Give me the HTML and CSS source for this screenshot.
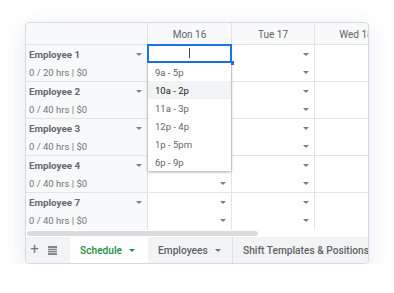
FILE: index.html
```html
<!DOCTYPE html>
<html>
<head>
<meta charset="utf-8">
<link rel="stylesheet" href="styles.css">
</head>
<body>
<div class="card">
  <div class="sheet">
    <div class="grid">
      <div class="hcell corner"></div>
      <div class="hcell">Mon 16</div>
      <div class="hcell">Tue 17</div>
      <div class="hcell">Wed 18</div>

      <div class="emp"><div class="line name">Employee 1<span class="arr"></span></div><div class="line sub">0 / 20 hrs | $0</div></div>
      <div class="day"><div class="line"><span class="arr"></span></div><div class="line"><span class="arr"></span></div></div>
      <div class="day"><div class="line"><span class="arr"></span></div><div class="line"><span class="arr"></span></div></div>
      <div class="day"><div class="line"><span class="arr"></span></div><div class="line"><span class="arr"></span></div></div>

      <div class="emp"><div class="line name">Employee 2<span class="arr"></span></div><div class="line sub">0 / 40 hrs | $0</div></div>
      <div class="day"><div class="line"><span class="arr"></span></div><div class="line"><span class="arr"></span></div></div>
      <div class="day"><div class="line"><span class="arr"></span></div><div class="line"><span class="arr"></span></div></div>
      <div class="day"><div class="line"><span class="arr"></span></div><div class="line"><span class="arr"></span></div></div>

      <div class="emp"><div class="line name">Employee 3<span class="arr"></span></div><div class="line sub">0 / 40 hrs | $0</div></div>
      <div class="day"><div class="line"><span class="arr"></span></div><div class="line"><span class="arr"></span></div></div>
      <div class="day"><div class="line"><span class="arr"></span></div><div class="line"><span class="arr"></span></div></div>
      <div class="day"><div class="line"><span class="arr"></span></div><div class="line"><span class="arr"></span></div></div>

      <div class="emp"><div class="line name">Employee 4<span class="arr"></span></div><div class="line sub">0 / 40 hrs | $0</div></div>
      <div class="day"><div class="line"><span class="arr"></span></div><div class="line"><span class="arr"></span></div></div>
      <div class="day"><div class="line"><span class="arr"></span></div><div class="line"><span class="arr"></span></div></div>
      <div class="day"><div class="line"><span class="arr"></span></div><div class="line"><span class="arr"></span></div></div>

      <div class="emp last"><div class="line name">Employee 7<span class="arr"></span></div><div class="line sub">0 / 40 hrs | $0</div></div>
      <div class="day last"><div class="line"><span class="arr"></span></div><div class="line"><span class="arr"></span></div></div>
      <div class="day last"><div class="line"><span class="arr"></span></div><div class="line"><span class="arr"></span></div></div>
      <div class="day last"><div class="line"><span class="arr"></span></div><div class="line"><span class="arr"></span></div></div>
    </div>
    <div class="selection"><span class="caret"></span><span class="handle"></span></div>
    <div class="menu">
      <div class="item">9a - 5p</div>
      <div class="item active">10a - 2p</div>
      <div class="item">11a - 3p</div>
      <div class="item">12p - 4p</div>
      <div class="item">1p - 5pm</div>
      <div class="item">6p - 9p</div>
    </div>
  </div>
  <div class="scroll"><div class="thumb"></div></div>
  <div class="tabs">
    <div class="tool plus">+</div>
    <div class="tool list"><svg width="9" height="9" viewBox="0 0 9 9"><rect x="0" y="0" width="9" height="9" fill="#80868b"/><rect x="0" y="2" width="9" height="0.7" fill="#f1f3f4"/><rect x="0" y="4.2" width="9" height="0.7" fill="#f1f3f4"/><rect x="0" y="6.4" width="9" height="0.7" fill="#f1f3f4"/></svg></div>
    <div class="tab current">Schedule<span class="tarr"></span></div>
    <div class="tab">Employees<span class="tarr"></span></div>
    <div class="tab">Shift Templates &amp; Positions</div>
  </div>
</div>
</body>
</html>
```
FILE: styles.css
```css
* { box-sizing: border-box; }
body {
  margin: 0;
  background: #ffffff;
  font-family: Roboto, "Noto Sans", sans-serif;
}
.card {
  margin: 22px 0 0 25px;
  width: 344px;
  height: 242px;
  border: 1px solid #d3dae6;
  border-radius: 4px;
  background: #fff;
  overflow: hidden;
  box-shadow: 0 6px 22px rgba(60, 80, 130, 0.13);
  display: flex;
  flex-direction: column;
}
.sheet {
  position: relative;
  height: 207px;
  overflow: hidden;
  flex-shrink: 0;
}
.grid {
  display: grid;
  grid-template-columns: 122px 84px 83px 83px;
  grid-template-rows: 22px repeat(5, 37px);
  width: 372px;
}
.hcell {
  background: #f8f9fa;
  border-right: 1px solid #e2e3e5;
  border-bottom: 1px solid #e2e3e5;
  color: #5f6368;
  font-size: 10px;
  display: flex;
  align-items: center;
  justify-content: center;
  padding-top: 1px;
}
.emp {
  background: #f8f9fa;
  border-right: 1px solid #e2e3e5;
  border-bottom: 1px solid #e2e3e5;
}
.day {
  border-right: 1px solid #e2e3e5;
  border-bottom: 1px solid #e2e3e5;
}
.last { border-bottom: none; }
.line {
  height: 18px;
  display: flex;
  align-items: center;
  justify-content: flex-end;
  position: relative;
  padding-right: 5px;
}
.emp .line {
  justify-content: space-between;
  padding-left: 3px;
}
.name {
  font-weight: 700;
  color: #65686d;
  font-size: 9.8px;
}
.sub {
  color: #70757a;
  font-size: 9.5px;
}
.arr {
  width: 0;
  height: 0;
  border-left: 3px solid transparent;
  border-right: 3px solid transparent;
  border-top: 3px solid #7a7f85;
}
.selection {
  position: absolute;
  left: 121px;
  top: 21px;
  width: 85px;
  height: 19px;
  border: 2px solid #1a73e8;
  background: #fff;
}
.caret {
  position: absolute;
  left: 40px;
  top: 2px;
  width: 1px;
  height: 10px;
  background: #444;
}
.handle {
  position: absolute;
  right: -4px;
  bottom: -4px;
  width: 4px;
  height: 4px;
  background: #1a73e8;
}
.menu {
  position: absolute;
  left: 122px;
  top: 40px;
  width: 83px;
  background: #fff;
  box-shadow: 0 1px 3px rgba(0, 0, 0, 0.35);
}
.item {
  height: 18px;
  padding-left: 7px;
  display: flex;
  align-items: center;
  font-size: 9.5px;
  color: #5f6368;
}
.item.active {
  background: #f1f3f4;
  color: #202124;
}
.scroll {
  height: 7px;
  padding: 1px 0 0 1px;
  flex-shrink: 0;
}
.thumb {
  width: 231px;
  height: 5px;
  border-radius: 3px;
  background: #dadce0;
}
.tabs {
  flex: 1;
  background: #f1f3f4;
  display: flex;
  align-items: stretch;
  white-space: nowrap;
}
.tool, .tab { flex-shrink: 0; }
.tool {
  display: flex;
  align-items: center;
  justify-content: center;
  color: #70757a;
}
.plus {
  width: 15px;
  margin-left: 1px;
  font-size: 15px;
  padding-bottom: 2px;
}
.list {
  width: 20px;
}
.tab {
  display: flex;
  align-items: center;
  padding-left: 10px;
  font-size: 10.2px;
  font-weight: 500;
  color: #5f6368;
  border-right: 1px solid #dcdfe3;
}
.tab.current {
  width: 78px;
  margin-left: 8px;
  background: #fff;
  color: #1e8e3e;
  border-right: none;
}
.tab:nth-child(4) {
  width: 85px;
}
.tab:last-child {
  border-right: none;
  padding-left: 10px;
}
.tarr {
  margin-left: 7px;
  width: 0;
  height: 0;
  border-left: 3px solid transparent;
  border-right: 3px solid transparent;
  border-top: 3px solid currentColor;
}
.tab:nth-child(4) .tarr { color: #70757a; }
```
